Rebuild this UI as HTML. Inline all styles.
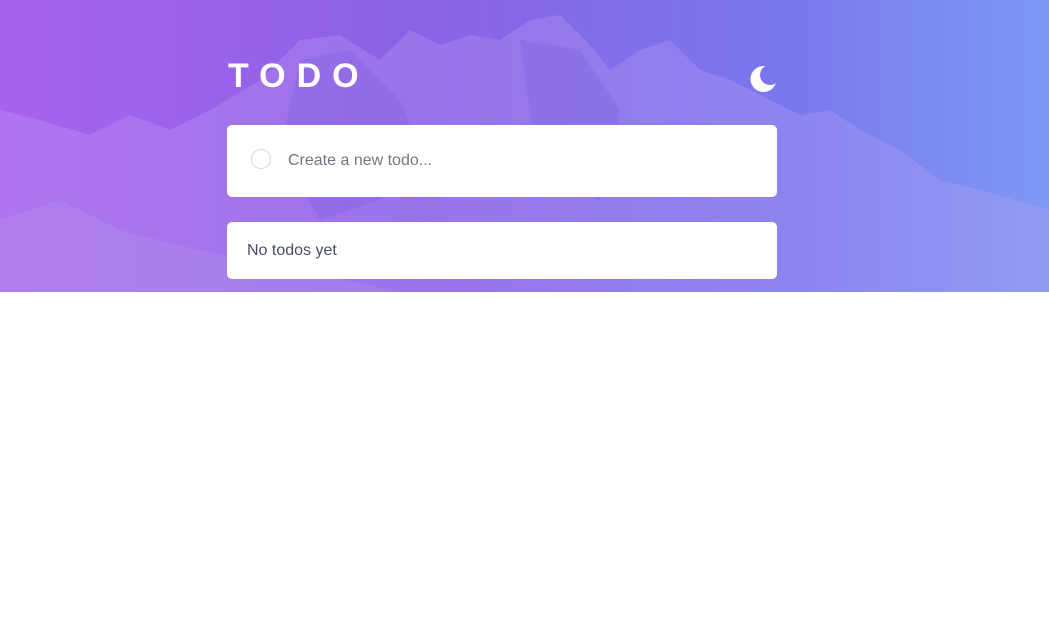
<!DOCTYPE html>
<html><head><meta charset="utf-8"><style>
html,body{margin:0;padding:0;width:1049px;height:637px;background:#fff;overflow:hidden;font-family:"Liberation Sans",sans-serif}
.hero{position:absolute;left:0;top:0;width:1049px;height:292px;background:linear-gradient(90deg,#a863ee 0%,#8a62e6 40%,#7a78ee 75%,#7e98f4 100%);overflow:hidden}
.hero svg.bg{position:absolute;left:0;top:0}
h1{position:absolute;left:228px;top:56px;margin:0;color:#fff;font-size:34px;font-weight:bold;letter-spacing:11px;line-height:40px}
.hero svg.moon{position:absolute;left:750px;top:64px}
.card{position:absolute;left:227px;width:550px;background:#fff;border-radius:5px}
.c1{top:125px;height:72px}
.c2{top:222px;height:57px}
.circ{position:absolute;left:24px;top:24px;width:18px;height:18px;border:1px solid #d6d6de;border-radius:50%}
.ph{position:absolute;left:61px;top:27px;font-size:16px;color:#777380}
.nt{position:absolute;left:20px;top:20px;font-size:16px;color:#494c6b}
</style></head><body>
<div class="hero">
<svg class="bg" width="1049" height="292" viewBox="0 0 1049 292">
<polygon fill="#c9a8f5" opacity="0.25" points="0,110 40,120 90,135 130,115 170,130 210,110 260,80 300,40 340,35 380,60 410,30 440,45 470,35 500,40 530,20 560,15 590,45 610,70 640,50 670,40 700,70 730,80 760,95 800,115 830,110 860,130 900,150 940,180 980,190 1049,210 1049,292 0,292"/>
<polygon fill="#6a4fd8" opacity="0.2" points="300,60 350,50 400,100 420,150 380,200 320,220 280,150"/>
<polygon fill="#6a4fd8" opacity="0.2" points="520,40 580,50 620,110 600,200 540,180"/>
<polygon fill="#b89cf0" opacity="0.25" points="0,220 60,200 120,230 200,250 300,270 400,292 0,292"/>
</svg>
<h1>TODO</h1>
<svg class="moon" width="28" height="30" viewBox="0 0 28 30"><defs><mask id="m"><rect width="28" height="30" fill="#fff"/><circle cx="20" cy="11" r="10" fill="#000"/></mask></defs><circle cx="13.5" cy="15" r="13" fill="#fff" mask="url(#m)"/></svg>
</div>
<div class="card c1"><div class="circ"></div><div class="ph">Create a new todo...</div></div>
<div class="card c2"><div class="nt">No todos yet</div></div>
</body></html>
